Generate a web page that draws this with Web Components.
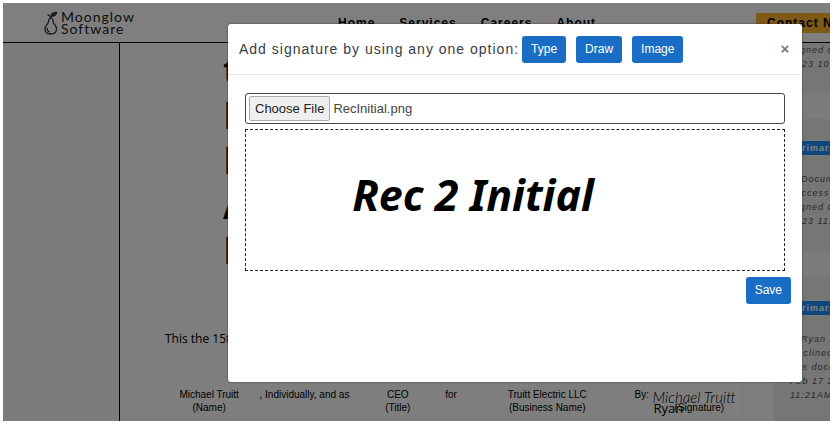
<!DOCTYPE html>
<html lang="en">
<head>
<meta charset="utf-8">
<title>Moonglow Software – Add signature</title>
<style>
body{margin:0;background:#fff;font-family:"Liberation Sans",Arial,sans-serif;color:#000}
</style>
</head>
<body>
<sign-app></sign-app>
<script>
const define=(name,html,ready)=>{
  const t=document.createElement('template');
  t.innerHTML=html;
  customElements.define(name,class extends HTMLElement{
    constructor(){
      super();
      this.attachShadow({mode:'open'}).append(t.content.cloneNode(true));
      if(ready)ready(this.shadowRoot,this);
    }
  });
};

define('brand-logo',`
<style>
:host{display:flex;align-items:center;gap:3px;color:#222}
svg{width:14px;height:24px;flex:none}
span{font:14px/12px Lato,sans-serif;letter-spacing:1px;display:block}
</style>
<svg viewBox="0 0 14 24" fill="none" stroke="#333" stroke-width="1.3" stroke-linecap="round" stroke-linejoin="round">
<path d="M6 7C4.600 7.700 4.700 9.500 4.200 11.500C3.800 13.400 1 14.500 1 18C1 21.200 3.500 23 6.700 23S12.500 21.200 12.500 18C12.500 14.700 9.800 13.500 9.300 11.300C8.900 9.300 9 7.600 7.600 7"/>
<path d="M6.800 7.500C6.600 5.500 6.800 4 8 2.800C9.300 1.400 11.200 1.300 12.600 1.400C12.300 3.300 10.800 5 8.400 5.200L7 5.300M4 3.800L6.500 5.800M3.200 17.500C3.200 19.400 4 20.500 5.300 21M8.200 4.600L10.600 2.900"/>
</svg>
<div><span>Moonglow</span><span>Software</span></div>`);

define('site-header',`
<style>
:host{display:flex;align-items:flex-start;height:39px;border-bottom:1px solid #000;padding-left:41px;white-space:nowrap}
brand-logo{width:294px;flex:none;padding-top:8px}
nav{display:flex;gap:24px;flex:none;width:418px;padding-top:12px}
a{color:#000;text-decoration:none;font:bold 12px/16px "Liberation Sans",sans-serif;letter-spacing:1px}
button{margin-top:10px;border:0;border-radius:0;background:#ffb52e;padding:0 11px;font:bold 12px/20px "Liberation Sans",sans-serif;letter-spacing:1px;color:#000}
</style>
<brand-logo></brand-logo>
<nav><a href="#">Home</a><a href="#">Services</a><a href="#">Careers</a><a href="#">About</a></nav>
<button type="button">Contact N</button>`);

define('contract-page',`
<style>
:host{display:block;flex:1;min-width:0;border-right:1px solid #eee}
.clauses{font:bold 38px/45px "Open Sans",sans-serif;padding:4px 0 0 103px}
.clauses div{height:45px}
p{margin:58px 0 40px 45px;font:12px/18px "Open Sans",sans-serif}
.parties{display:grid;grid-template-columns:74fr 116fr 70fr 36fr 156fr 116fr;padding-left:52px;font-size:10px;line-height:13px;text-align:center;white-space:nowrap}
.by{text-align:left;padding-left:9px;position:relative}
.caption{padding-left:40px}
.ink{position:absolute;left:27px;top:1px;font:italic 300 15px/16px Lato,sans-serif}
.name{position:absolute;left:28px;top:12px;font:13px/16px "Open Sans",sans-serif}
</style>
<div class="clauses"><div>t</div><div>E</div><div>E</div><div>A</div><div>E</div></div>
<p>This the 15t</p>
<div class="parties">
<div>Michael Truitt<br>(Name)</div><div>, Individually, and as</div><div>CEO<br>(Title)</div><div>for</div><div>Truitt Electric LLC<br>(Business Name)</div>
<div class="by">By:<div class="caption">(Signature)</div><span class="ink">Michael Truitt</span><span class="name">Ryan</span></div>
</div>`);

define('activity-card',`
<style>
:host{display:block;background:#ececec;padding-left:16px;white-space:nowrap}
.text{font:italic 9px/14px "Liberation Sans",sans-serif;letter-spacing:1px;color:#555}
::slotted(b){display:block;background:#1e90ff;color:#fff;font:bold 9px/14px "Liberation Sans",sans-serif;letter-spacing:1px;padding-left:5px}
</style>
<slot name="badge"></slot><div class="text"><slot></slot></div>`);

define('activity-list',`
<style>
:host{display:flex;flex-direction:column;width:56px;flex:none;margin-left:31px;overflow:hidden}
.band{height:26px;background:#f6f7fc;flex:none}
.first{height:50px;flex:none}
.second{height:110px;padding-top:22px;flex:none}
.last{flex:1;padding-top:24px}
b{margin-bottom:17px}
.in{padding-left:11px}
</style>
<activity-card class="first"><div>Signed o</div><div>2023 10:</div></activity-card>
<div class="band"></div>
<activity-card class="second"><b slot="badge">Primary</b><div class="in">Docum</div><div>success</div><div>Signed o</div><div>2023 11:</div></activity-card>
<div class="band"></div>
<activity-card class="last"><b slot="badge">Primary</b><div class="in">Ryan E</div><div>Declined</div><div>this docu</div><div>Feb 17 2</div><div>11:21AM</div></activity-card>`);

define('blue-button',`
<style>
:host{display:inline-block}
button{display:block;border:0;border-radius:3px;background:#1a6dc5;color:#fff;padding:0 9px;font:12px/27px "Liberation Sans",sans-serif}
</style>
<button type="button"><slot></slot></button>`);

define('signature-dialog',`
<style>
:host{display:flex;flex-direction:column;background:#fff;border-radius:3px;box-shadow:0 0 2px #333}
header{display:flex;align-items:center;gap:10px;height:50px;padding:0 11px;border-bottom:1px solid #e3e5e8;white-space:nowrap}
h1{margin:0 -7px 0 0;font-weight:normal;font-size:14px;letter-spacing:1px;color:#373d43}
.close{margin-left:auto;border:0;background:none;padding:0;width:12px;height:20px;color:#777;font:bold 15px/20px "Liberation Sans",sans-serif}
main{padding:18px 17px 0}
input{display:block;box-sizing:border-box;width:100%;border:1px solid #444;border-radius:3px;height:31px;padding:2px 3px;font:13px/24px "Liberation Sans",sans-serif;color:#444}
input::file-selector-button{height:25px;margin:0 3px 0 0;padding:0 5px;border:1px solid #aaa;border-radius:2px;background:#efefef;color:#222;font:13px/23px "Liberation Sans",sans-serif}
.preview{display:flex;justify-content:center;align-items:center;border:1px dashed #222;height:140px;margin-top:5px;padding-right:84px;font:italic bold 43px/60px "Noto Sans",sans-serif;white-space:nowrap}
.preview span{padding-bottom:10px}
footer{display:flex;justify-content:flex-end;padding:6px 11px 0}
</style>
<header><h1>Add signature by using any one option:</h1><blue-button>Type</blue-button><blue-button>Draw</blue-button><blue-button>Image</blue-button><button class="close" type="button" aria-label="Close">×</button></header>
<main><input type="file" aria-label="Signature image"><div class="preview"><span>Rec 2 Initial</span></div></main>
<footer><blue-button>Save</blue-button></footer>`,root=>{
  const picked=new DataTransfer();
  picked.items.add(new File([''],'RecInitial.png',{type:'image/png'}));
  root.querySelector('input').files=picked.files;
});

define('sign-app',`
<style>
:host{display:block;padding:3px 5px 4px 3px}
.frame{position:relative;display:flex;flex-direction:column;height:calc(100vh - 7px);overflow:hidden;background:#fff}
.work{display:flex;flex:1;min-height:0;background:#fcfcfc}
aside{width:116px;flex:none;background:#f6f8fb;border-right:1px solid #000}
.shade{position:absolute;inset:0;background:rgba(0,0,0,.5);display:flex;padding:21px 28px 39px 225px}
signature-dialog{flex:1;min-width:0}
</style>
<div class="frame">
<site-header></site-header>
<div class="work"><aside></aside><contract-page></contract-page><activity-list></activity-list></div>
<div class="shade"><signature-dialog role="dialog" aria-label="Add signature"></signature-dialog></div>
</div>`);
</script>
</body>
</html>
